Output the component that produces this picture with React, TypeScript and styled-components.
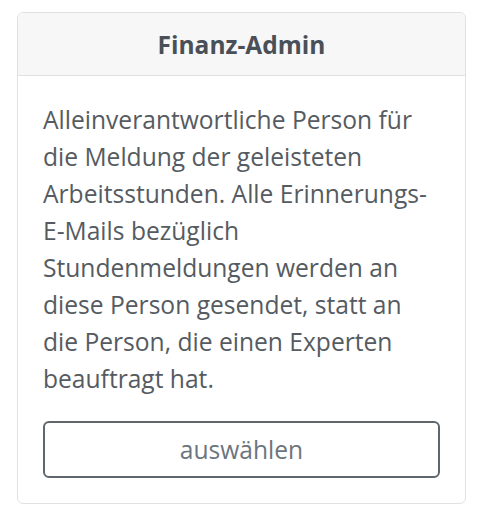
import React from 'react';
import styled, { createGlobalStyle } from 'styled-components';

const GlobalStyle = createGlobalStyle`
  html, body {
    margin: 0;
    padding: 0;
    background: #fff;
  }
  body {
    font-family: "Open Sans", "Liberation Sans", sans-serif;
  }
`;

const Page = styled.div`
  padding: 12px 14px 14px 17px;
`;

const Card = styled.section`
  border: 1px solid #e1e1e1;
  border-radius: 6px;
  background: #fff;
  overflow: hidden;
`;

const Header = styled.h2`
  margin: 0;
  height: 62px;
  display: flex;
  align-items: center;
  justify-content: center;
  background: #f7f7f7;
  border-bottom: 1px solid #dfe2e5;
  color: #495057;
  font-size: 24.5px;
  font-weight: 700;
`;

const Body = styled.div`
  padding: 25px 25px 25px 25px;
  display: flex;
  flex-direction: column;
  gap: 24px;
`;

const Text = styled.p`
  margin: 0;
  color: #555b61;
  font-size: 24.6px;
  line-height: 37px;
`;

const SelectButton = styled.button`
  height: 57px;
  border: 2px solid #5f666c;
  border-radius: 6px;
  background: #fff;
  color: #6c757d;
  font-family: "Open Sans", "Liberation Sans", sans-serif;
  font-size: 24.6px;
  cursor: pointer;
`;

const App = () => {
  return (
    <Page>
      <GlobalStyle />
      <Card>
        <Header>Finanz-Admin</Header>
        <Body>
          <Text>
            Alleinverantwortliche Person für die Meldung der geleisteten
            Arbeitsstunden. Alle Erinnerungs-E-Mails bezüglich
            Stundenmeldungen werden an diese Person gesendet, statt an die
            Person, die einen Experten beauftragt hat.
          </Text>
          <SelectButton>auswählen</SelectButton>
        </Body>
      </Card>
    </Page>
  );
};

export default App;
